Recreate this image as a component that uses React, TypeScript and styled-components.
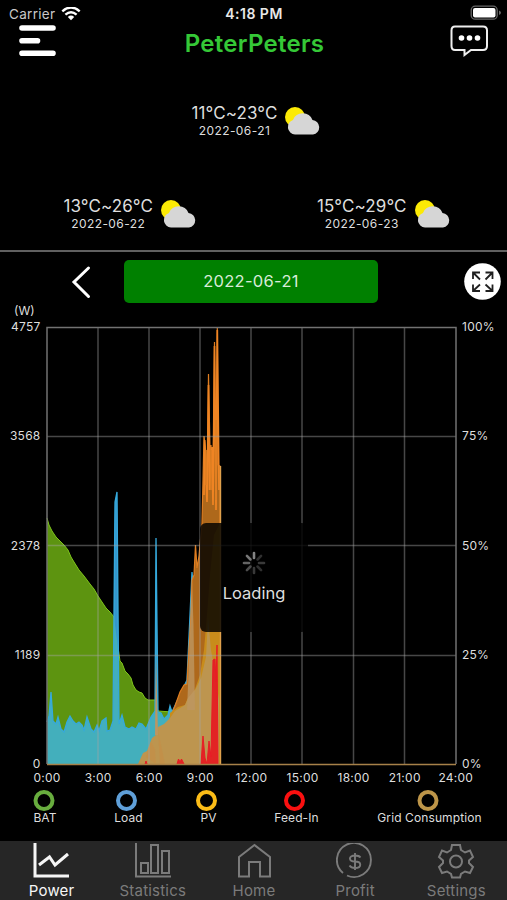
import React from 'react';
import styled, { createGlobalStyle } from 'styled-components';

const GlobalStyle = createGlobalStyle`
  * { box-sizing: border-box; }
  body { margin: 0; background: #000; }
`;

const Screen = styled.main`
  width: 507px;
  height: 900px;
  display: flex;
  flex-direction: column;
  overflow: hidden;
  background: #000;
  color: #dedede;
  font-family: Inter, 'Liberation Sans', sans-serif;
  white-space: nowrap;
`;

const StatusBar = styled.div`
  height: 25px;
  flex: none;
  display: grid;
  grid-template-columns: 1fr auto 1fr;
  align-items: center;
  padding: 3px 7px 0 9px;
  font-size: 13.5px;
  line-height: 20px;
`;

const Carrier = styled.div`
  display: flex;
  align-items: center;
  gap: 6px;
  color: #c8c8c8;
  letter-spacing: 0.3px;
`;

const Clock = styled.div`
  color: #e8e8e8;
  font-weight: 600;
  font-size: 14px;
  letter-spacing: 0.5px;
  margin-right: 1px;
`;

const BatterySlot = styled.div`
  display: flex;
  justify-content: flex-end;
  margin: -2px -2px 0 0;
`;

const Header = styled.header`
  height: 45px;
  flex: none;
  display: grid;
  grid-template-columns: 60px 1fr 60px;
  padding: 0 17px 0 19px;
`;

const Title = styled.h1`
  margin: 3px 0 0;
  text-align: center;
  font-size: 24px;
  line-height: 32px;
  font-weight: 600;
  letter-spacing: 0.28px;
  color: #35c837;
`;

const HeaderIcon = styled.button<{ $end?: boolean }>`
  display: flex;
  justify-content: ${(p) => (p.$end ? 'flex-end' : 'flex-start')};
  align-items: flex-start;
  padding: 0;
  border: 0;
  background: none;
`;

const Forecast = styled.section`
  height: 182px;
  flex: none;
  display: grid;
  grid-template-columns: 1fr 1fr;
  grid-template-rows: 93px 1fr;
  padding-top: 33px;
  border-bottom: 2px solid #606060;
  margin-bottom: 8px;
`;

const Day = styled.article<{ $wide?: boolean }>`
  grid-column: ${(p) => (p.$wide ? '1 / -1' : 'auto')};
  display: flex;
  justify-content: center;
  align-items: flex-start;
  gap: 8px;
  padding-left: ${(p) => (p.$wide ? '6px' : '7px')};
  svg { margin-top: 3px; }
`;

const DayText = styled.div`
  display: flex;
  flex-direction: column;
  align-items: center;
`;

const Temperature = styled.div`
  font-size: 17px;
  line-height: 20px;
  height: 20px;
  letter-spacing: 0.1px;
`;

const DayDate = styled.div`
  font-size: 12px;
  line-height: 16px;
  letter-spacing: 0.4px;
`;

const DateBar = styled.section`
  height: 43px;
  flex: none;
  display: grid;
  grid-template-columns: 53px 254px 1fr;
  padding: 0 6px 0 71px;
`;

const IconButton = styled.button<{ $end?: boolean }>`
  display: flex;
  align-items: center;
  justify-content: ${(p) => (p.$end ? 'flex-end' : 'flex-start')};
  padding: 0;
  border: 0;
  background: none;
`;

const DateButton = styled.button`
  border: 0;
  border-radius: 5px;
  background: #008000;
  color: #d8ecd8;
  font: 400 16.5px/40px Inter, sans-serif;
  letter-spacing: 0.3px;
  padding: 0 0 1px;
`;

const ChartSection = styled.section`
  height: 463px;
  flex: none;
  display: grid;
  grid-template-columns: 46px 412px 1fr;
  grid-template-rows: 23px 440px;
  font-size: 12px;
  line-height: 14px;
`;

const Unit = styled.div`
  padding: 1px 0 0 14px;
  letter-spacing: 0;
`;

const Axis = styled.div<{ $right?: boolean }>`
  grid-row: 2;
  grid-column: ${(p) => (p.$right ? 3 : 1)};
  display: flex;
  flex-direction: column;
  justify-content: space-between;
  align-items: ${(p) => (p.$right ? 'flex-start' : 'flex-end')};
  height: 451px;
  margin-top: -6px;
  padding: ${(p) => (p.$right ? '0 0 0 4px' : '0 5.5px 0 0')};
  letter-spacing: 0.25px;
`;

const PlotArea = styled.div`
  grid-row: 2;
  grid-column: 2;
  position: relative;
`;

const Plot = styled.svg`
  display: block;
  width: 412px;
  height: 440px;
`;

const LoadingBox = styled.div`
  position: absolute;
  left: 154px;
  top: 197px;
  width: 108px;
  height: 109px;
  border-radius: 6px;
  background: rgba(0, 0, 0, 0.82);
  display: flex;
  flex-direction: column;
  align-items: center;
  gap: 6px;
  padding-top: 28px;
  font-size: 16.5px;
  line-height: 24px;
  letter-spacing: 0;
`;

const Times = styled.div`
  height: 22px;
  flex: none;
  display: grid;
  grid-template-columns: repeat(9, 51.1px);
  padding: 5px 0 0 21.5px;
  text-align: center;
  font-size: 12px;
  line-height: 13px;
  letter-spacing: 0.25px;
`;

const Legend = styled.div`
  height: 53px;
  flex: none;
  display: flex;
  align-items: flex-start;
  padding: 2px 0 0 33.5px;
`;

const LegendItem = styled.div<{ $width: number; $gap: number }>`
  width: ${(p) => p.$width}px;
  margin-right: ${(p) => p.$gap}px;
  flex: none;
  display: flex;
  flex-direction: column;
  align-items: center;
  font-size: 12px;
  line-height: 14px;
  letter-spacing: 0.1px;
`;

const Ring = styled.i<{ $color: string; $shift: number }>`
  width: 21px;
  height: 21px;
  border: 4.5px solid ${(p) => p.$color};
  border-radius: 50%;
  transform: translateX(${(p) => p.$shift}px);
`;

const TabBar = styled.nav`
  height: 60px;
  flex: none;
  display: grid;
  grid-template-columns: repeat(5, 101.2px);
  padding-left: 1px;
  background: #262626;
`;

const Tab = styled.a<{ $active?: boolean }>`
  display: flex;
  flex-direction: column;
  align-items: center;
  padding-top: 2px;
  color: ${(p) => (p.$active ? '#f6f6f6' : '#7b7b7b')};
  font-size: 15px;
  line-height: 18px;
  letter-spacing: 0.2px;
  svg { display: block; height: 37px; width: 38px; margin-bottom: 2px; }
`;

const CloudSun = () => (
  <svg width="36" height="30" viewBox="0 0 36 30">
    <circle cx="10" cy="11" r="10" fill="#fcea05" />
    <path d="M10 28.5a7.5 7.5 0 0 1-2-14.6A10.5 10.5 0 0 1 27.5 14 7.3 7.3 0 0 1 28 28.5Z" fill="#d6d6d6" />
  </svg>
);

const forecast = [
  { temp: '11°C~23°C', date: '2022-06-21' },
  { temp: '13°C~26°C', date: '2022-06-22' },
  { temp: '15°C~29°C', date: '2022-06-23' },
];

const batteryLine =
  '47,518 49,525 52,531 56,537 60,541 64,545 68,550 71,557 74,562 79,570 84,576 90,584 94,589 98,596 102,602 106,608 110,612 114,617 117,640 120,661 122,663 125,671 128,674 131,678 133,685 136,690 139,692 142,693 145,698 148,700 155,700 158,711 172,712';
const loadLine =
  '47,722 49,716 51,692 53,721 56,724 58,717 61,729 64,732 67,722 70,716 73,721 76,724 79,722 82,725 84,730 87,717 91,729 94,732 97,725 99,731 102,721 106,718 107,731 110,730 113,721 115,502 117,492 119,724 122,715 125,727 129,729 132,727 136,729 139,723 142,724 146,729 151,717 155,711 156,538 158,712 161,713 164,719 168,715 170,706 172,712 187,680 192,572 195,610 200,635';

const PowerPlot = () => (
  <Plot viewBox="46 326 412 440">
    <polygon points={`47,764 ${batteryLine} 172,764`} fill="#5d9410" />
    <polyline points={batteryLine} fill="none" stroke="#7fc51b" />
    <polygon points={`47,764 ${loadLine} 200,764`} fill="#43afbc" />
    <path d="M114 617 115 502 117 492 118 648ZM155.3 700 156 538 157 710Z" fill="#3696cc" />
    <polyline points={loadLine} fill="none" stroke="#35a9dc" strokeWidth="1.3" />
    <path
      d="M170 764V718L175 706 180 692 184 685 187 684 188 665 191 615 192 580 194 575 195.5 545 197 568 199 556 202 523 203 480 204 436 206 454 207 500 208.5 374 210 450 211 445 213 490 214.5 342 216 480 217.3 328 218 465 220 466V764Z"
      fill="#ae681b"
      stroke="#df7d20"
      strokeWidth="1.2"
    />
    <path d="M204 495 204.7 440 207 502 208.5 385 209.5 490 212 447 213 505 214.5 346 216 510 217.3 330 219 490" fill="none" stroke="#ef8423" strokeWidth="1.7" />
    <path d="M206 450V485M211 450V490M216 420V500" stroke="#df7f22" strokeWidth="1.6" />
    <path d="M170 713 178 707 185 705 187 700 195 689 200 675 204 650 207 615 210 575 214 535 220 523V764H170Z" fill="#c88c1b" />
    <path
      d="M138 764 143 753 147 751 152 738 156 735 158 727 164 724 170 718 175 711 185 705 188 698 195 690 201 678 206 657 208 618 211 650 215 672 219 700V764Z"
      fill="#bd954f"
    />
    <path d="M155 735 156 656 158 735Z" fill="#bd9662" />
    <path d="M187 710 189 660 192 580 193.5 625 195 710Z" fill="#bd9662" opacity=".8" />
    <path d="M146 757 151 741 155 749 156 764ZM158 730 160 764 165 764Z" fill="#c58e47" opacity=".7" />
    <path
      d="M177 764 178.5 759 180 762 181.5 759 184 764ZM201 764 203 736 205 758 207 764 209 741 211 757 213 660 215 659 216 682 217 645 218 764ZM145 764 146 761 147 764Z"
      fill="#e22424"
      stroke="#e91b25"
    />
    <path d="M220.5 466V764" stroke="#dfa14c" strokeWidth="1.4" />
    <g fill="none" stroke="#a5a5a5" strokeOpacity=".43">
      <path strokeWidth="1.5" d="M47 436.5H456M47 545.5H456M47 655.5H456" />
      <path strokeWidth="1.5" d="M98 327V764M149 327V764M200 327V764M251 327V764M302 327V764M353.5 327V764M404.5 327V764" />
    </g>
    <path d="M47 764V327.5H456V764" fill="none" stroke="#727272" strokeWidth="1.5" />
    <path d="M47 764.5H456" stroke="#a78149" strokeWidth="1.4" />
  </Plot>
);

const Spinner = () => (
  <svg width="24" height="24" viewBox="-12 -12 24 24" strokeWidth="2.6" strokeLinecap="round">
    {['#858585', '#303030', '#393939', '#303030', '#393939', '#4d4d4d', '#646464', '#777777'].map((color, i) => (
      <path key={i} d="M0-5V-10" stroke={color} transform={`rotate(${i * 45})`} />
    ))}
  </svg>
);

const legend = [
  { label: 'BAT', color: '#68ad3e', width: 23, gap: 57.5, shift: -1.5 },
  { label: 'Load', color: '#5f9fd8', width: 29, gap: 57, shift: -2 },
  { label: 'PV', color: '#fbbc17', width: 17, gap: 56.5, shift: -2 },
  { label: 'Feed-In', color: '#fa1010', width: 46, gap: 56.5, shift: -2 },
  { label: 'Grid Consumption', color: '#bd9549', width: 107, gap: 0, shift: -1.5 },
];

const icons = [
  <path key="p" strokeWidth="3" d="M2 0V33H36M6 22 16.5 14 22 22 35 11" />,
  <path key="s" strokeWidth="2" d="M2 0V33.5H37M7 20H14V30H7ZM17 2H24V30H17ZM28 8H35V30H28Z" />,
  <path key="h" strokeWidth="2" d="M4 14 19.5 2 35 14V33.5H25V19H14V33.5H4Z" />,
  <g key="d" strokeWidth="1.9">
    <path d="M7 30A17 17 0 1 1 11 32.5M19 10V27M24.5 14.5Q23 12.5 19 12.5C12 12.5 12.5 18.5 19 18.5C26 18.5 26 25 19 25Q15 25 13.5 22.5" />
  </g>,
  <g key="g" strokeWidth="2">
    <path d="M15 2H23L24 7 28 9.5 33 7.5 36 14 32 17.5 32 20 36 24 33 30 28 28.5 24 31 23 34.5H15L14 31 10 28.5 5 30 2 24 6 20 6 17.5 2 14 5 7.5 10 9.5 14 7Z" />
    <circle cx="19" cy="18.5" r="6" />
  </g>,
];

export default function App() {
  return (
    <Screen>
      <GlobalStyle />
      <StatusBar>
        <Carrier>
          Carrier
          <svg width="20" height="15" viewBox="0 1 20 15" fill="none" stroke="#fff" strokeWidth="2.4">
            <path d="M1.3 5.3Q10-2.3 18.7 5.3M4.4 8.7Q10 3.8 15.6 8.7" />
            <path d="M6.8 11Q10 8.2 13.2 11L10 14.3Z" fill="#fff" stroke="none" />
          </svg>
        </Carrier>
        <Clock>4:18 PM</Clock>
        <BatterySlot>
          <svg width="32" height="16" viewBox="0 0 32 16">
            <rect x="1.2" y="1.2" width="26" height="13" rx="4" fill="none" stroke="#686868" strokeWidth="1.3" />
            <rect x="3" y="3" width="22.5" height="9.5" rx="2" fill="#fff" />
            <path d="M29 5.5Q33 7.5 29 10Z" fill="#686868" />
          </svg>
        </BatterySlot>
      </StatusBar>
      <Header>
        <HeaderIcon aria-label="Menu">
          <svg width="38" height="32" viewBox="0 0 38 32" stroke="#fff" strokeWidth="5.6" strokeLinecap="round">
            <path d="M3 3H34M3 15.7H18.5M3 28.3H34" />
          </svg>
        </HeaderIcon>
        <Title>PeterPeters</Title>
        <HeaderIcon $end aria-label="Messages">
          <svg width="40" height="32" viewBox="0 0 40 32" fill="none" stroke="#eee" strokeWidth="2">
            <path d="M5 1.5H33Q37 1.5 37 5.5V21Q37 25 33 25H21L14.5 30V25H5Q1.5 25 1.5 21V5.5Q1.5 1.5 5 1.5Z" />
            <g fill="#fff" stroke="none"><circle cx="11.5" cy="13" r="2.8" /><circle cx="19.5" cy="13" r="2.8" /><circle cx="27.5" cy="13" r="2.8" /></g>
          </svg>
        </HeaderIcon>
      </Header>
      <Forecast>
        {forecast.map((day, i) => (
          <Day key={day.date} $wide={i === 0}>
            <DayText>
              <Temperature>{day.temp}</Temperature>
              <DayDate>{day.date}</DayDate>
            </DayText>
            <CloudSun />
          </Day>
        ))}
      </Forecast>
      <DateBar>
        <IconButton aria-label="Previous day">
          <svg width="22" height="36" viewBox="0 0 22 36" fill="none" stroke="#fff" strokeWidth="3" strokeLinecap="round">
            <path d="M17.5 4 3 18 17.5 32.5" />
          </svg>
        </IconButton>
        <DateButton>2022-06-21</DateButton>
        <IconButton $end aria-label="Full screen">
          <svg width="37" height="37" viewBox="0 0 37 37">
            <circle cx="18.5" cy="18.5" r="18.3" fill="#fff" />
            <path d="M9 16V9.5H16M9.5 10 16 16.5M21.5 9.5H28.5V16M28 10 21.5 16.5M9 21.5V28H16M9.5 27.5 16 21.5M21.5 28H28.5V21.5M28 27.5 21.5 21.5" fill="none" stroke="#202020" strokeWidth="1.8" />
          </svg>
        </IconButton>
      </DateBar>
      <ChartSection>
        <Unit>(W)</Unit>
        <Axis>
          {['4757', '3568', '2378', '1189', '0'].map((v) => <span key={v}>{v}</span>)}
        </Axis>
        <PlotArea>
          <PowerPlot />
          <LoadingBox><Spinner />Loading</LoadingBox>
        </PlotArea>
        <Axis $right>
          {['100%', '75%', '50%', '25%', '0%'].map((v) => <span key={v}>{v}</span>)}
        </Axis>
      </ChartSection>
      <Times>
        {['0:00', '3:00', '6:00', '9:00', '12:00', '15:00', '18:00', '21:00', '24:00'].map((t) => <span key={t}>{t}</span>)}
      </Times>
      <Legend>
        {legend.map((item) => (
          <LegendItem key={item.label} $width={item.width} $gap={item.gap}>
            <Ring $color={item.color} $shift={item.shift} />
            {item.label}
          </LegendItem>
        ))}
      </Legend>
      <TabBar>
        {['Power', 'Statistics', 'Home', 'Profit', 'Settings'].map((label, i) => (
          <Tab key={label} $active={i === 0}>
            <svg viewBox="0 0 38 37" fill="none" stroke="currentColor">{icons[i]}</svg>
            {label}
          </Tab>
        ))}
      </TabBar>
    </Screen>
  );
}
